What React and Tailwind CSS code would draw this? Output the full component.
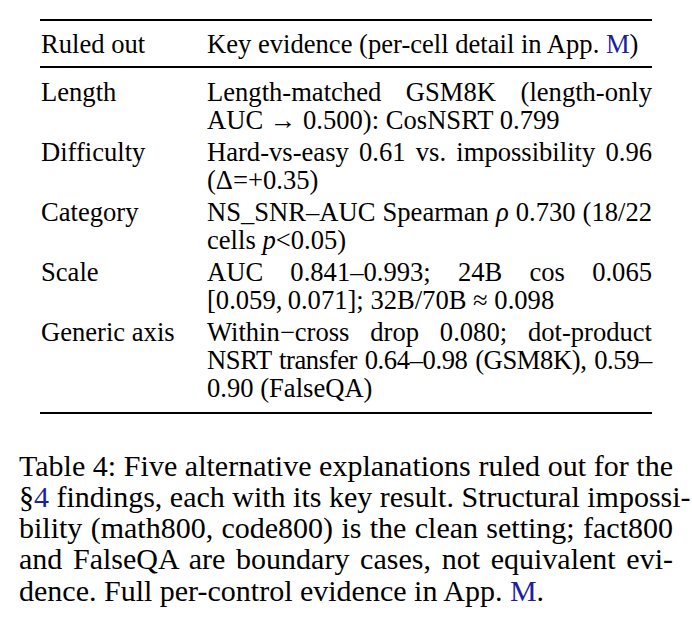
const rows = [
  {
    label: "Length",
    lines: [
      { j: true, c: <>Length-matched GSM8K (length-only</> },
      { c: <>AUC → 0.500): CosNSRT 0.799</> },
    ],
  },
  {
    label: "Difficulty",
    lines: [
      { j: true, c: <>Hard-vs-easy 0.61 vs. impossibility 0.96</> },
      { c: <>(Δ=+0.35)</> },
    ],
  },
  {
    label: "Category",
    lines: [
      { j: true, c: <>NS_SNR–AUC Spearman <i>ρ</i> 0.730 (18/22</> },
      { c: <>cells <i>p</i>&lt;0.05)</> },
    ],
  },
  {
    label: "Scale",
    lines: [
      { j: true, c: <>AUC 0.841–0.993; 24B cos 0.065</> },
      { c: <>[0.059,&thinsp;0.071]; 32B/70B ≈ 0.098</> },
    ],
  },
  {
    label: "Generic axis",
    lines: [
      { j: true, c: <>Within−cross drop 0.080; dot-product</> },
      { j: true, tight: true, c: <>NSRT transfer 0.64–0.98 (GSM8K), 0.59–</> },
      { c: <>0.90 (FalseQA)</> },
    ],
  },
];

function Line({ j, tight, children }) {
  return (
    <div
      className={
        (j
          ? "whitespace-nowrap text-justify [text-align-last:justify]"
          : "whitespace-nowrap") + (tight ? " tracking-[-0.4px]" : "")
      }
    >
      {children}
    </div>
  );
}

export default function App() {
  return (
    <div className="w-[692px] h-[637px] bg-white text-black [font-family:'Liberation_Serif',serif] overflow-hidden">
      <div className="ml-[40px] w-[612px] pt-[19px] text-[26.6px] leading-[28px]">
        <div className="h-[2px] bg-black" />
        <div className="grid grid-cols-[166px_446px] pl-[1px] pt-[9px] pb-[8px]">
          <div>Ruled out</div>
          <div className="whitespace-nowrap">
            Key evidence (per-cell detail in App. <span className="text-[#1f1f9e]">M</span>)
          </div>
        </div>
        <div className="h-[1.5px] bg-black" />
        <div className="pt-[8px] pb-[8px]">
          {rows.map((r) => (
            <div key={r.label} className="grid grid-cols-[166px_445px] pl-[1px] py-[2px]">
              <div className="whitespace-nowrap">{r.label}</div>
              <div className="flex flex-col min-w-0">
                {r.lines.map((l, i) => (
                  <Line key={i} j={l.j} tight={l.tight}>
                    {l.c}
                  </Line>
                ))}
              </div>
            </div>
          ))}
        </div>
        <div className="h-[2px] bg-black" />
      </div>
      <div className="ml-[19px] w-[654px] mt-[36px] text-[30px] leading-[31.3px]">
        <Line j>Table 4: Five alternative explanations ruled out for the</Line>
        <Line j>
          §<span className="text-[#1f1f9e]">4</span> findings, each with its key result. Structural impossi-
        </Line>
        <Line j>bility (math800, code800) is the clean setting; fact800</Line>
        <Line j>and FalseQA are boundary cases, not equivalent evi-</Line>
        <Line>
          dence. Full per-control evidence in App. <span className="text-[#1f1f9e]">M</span>.
        </Line>
      </div>
    </div>
  );
}
